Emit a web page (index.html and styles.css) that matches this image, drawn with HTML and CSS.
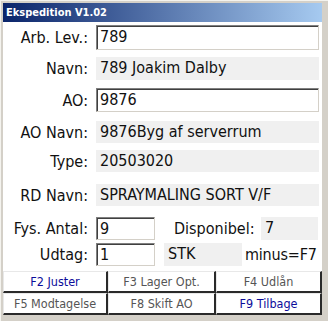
FILE: index.html
```html
<!DOCTYPE html>
<html lang="da">
<head>
  <meta charset="UTF-8">
  <title>Ekspedition V1.02</title>
  <link rel="stylesheet" href="styles.css">
</head>
<body>

<div class="window">
  <div class="titlebar">Ekspedition V1.02</div>

  <div class="content">
    <div class="row r-arb">
      <span class="label">Arb. Lev.:</span>
      <span class="input wide">789</span>
    </div>
    <div class="row r-navn">
      <span class="label">Navn:</span>
      <span class="value wide">789 Joakim Dalby</span>
    </div>
    <div class="row r-ao">
      <span class="label">AO:</span>
      <span class="input wide">9876</span>
    </div>
    <div class="row r-aonavn">
      <span class="label">AO Navn:</span>
      <span class="value wide">9876Byg af serverrum</span>
    </div>
    <div class="row r-type">
      <span class="label">Type:</span>
      <span class="value wide">20503020</span>
    </div>
    <div class="row r-rd">
      <span class="label">RD Navn:</span>
      <span class="value wide">SPRAYMALING SORT V/F</span>
    </div>
    <div class="row r-fys">
      <span class="label">Fys. Antal:</span>
      <span class="input small">9</span>
      <span class="sublabel">Disponibel:</span>
      <span class="value dispo">7</span>
    </div>
    <div class="row r-udtag">
      <span class="label">Udtag:</span>
      <span class="input small">1</span>
      <span class="value unit">STK</span>
      <span class="hint">minus=F7</span>
    </div>

    <!-- funktionstaster -->
    <div class="keys">
      <button class="key blue">F2 Juster</button>
      <button class="key">F3 Lager Opt.</button>
      <button class="key">F4 Udlån</button>
      <button class="key">F5 Modtagelse</button>
      <button class="key">F8 Skift AO</button>
      <button class="key blue">F9 Tilbage</button>
    </div>
  </div>
</div>

</body>
</html>
```

FILE: styles.css
```css
body {
  margin: 0;
  background: #d4d0c8;
  font-family: 'DejaVu Sans Condensed', 'DejaVu Sans', sans-serif;
  color: #000;
}

.window {
  width: 328px;
  height: 321px;
  box-sizing: border-box;
  padding: 3px 6px 6px 3px;
  border-top: 1px solid #f4f3ee;
  border-left: 1px solid #f4f3ee;
  display: flex;
  flex-direction: column;
}

.titlebar {
  height: 19px;
  margin-top: -1px;
  margin-left: -1px;
  padding-left: 3px;
  background: linear-gradient(to right, #0a246a, #a6caf0);
  color: white;
  font-weight: bold;
  font-size: 11px;
  line-height: 19px;
}

.content {
  flex: 1;
  background: #fff;
  margin-left: -1px;
  display: flex;
  flex-direction: column;
}

.row {
  display: flex;
  align-items: center;
  height: 24px;
  font-size: 16px;
  color: #111;
}

.r-arb { margin-top: 3px; height: 25px; }
.r-navn { margin-top: 7px; height: 23px; }
.r-ao { margin-top: 8px; }
.r-aonavn { margin-top: 9px; height: 22px; }
.r-type { margin-top: 7px; height: 22px; }
.r-rd { margin-top: 12px; height: 22px; }
.r-fys { margin-top: 11px; height: 23px; }
.r-udtag { margin-top: 3px; height: 23px; }

.label {
  width: 85px;
  text-align: right;
  margin-right: 8px;
  flex: none;
}

.input {
  box-sizing: border-box;
  height: 100%;
  background: #fff;
  border-top: 1px solid #808080;
  border-left: 1px solid #808080;
  border-right: 1px solid #d4d0c8;
  border-bottom: 1px solid #d4d0c8;
  box-shadow: inset 1px 1px 0 #404040;
  padding-left: 3px;
  line-height: 21px;
}

.value {
  box-sizing: border-box;
  height: 100%;
  background: #f0f0f0;
  padding-left: 4px;
  line-height: 22px;
}

.wide { width: 223px; }
.small { width: 59px; }

.sublabel {
  margin-left: 19px;
  width: 87px;
}

.dispo {
  width: 57px;
}

.unit {
  margin-left: 9px;
  width: 78px;
}

.hint {
  margin-left: 3px;
  letter-spacing: -0.2px;
}

.keys {
  margin-top: 5px;
  display: grid;
  grid-template-columns: 105px 108px 106px;
  grid-auto-rows: 22px;
}

.key {
  box-sizing: border-box;
  background: #fff;
  border: none;
  border-top: 1px solid #e8e8e8;
  border-left: 1px solid #e8e8e8;
  border-right: 2px solid #2a2a2a;
  border-bottom: 2px solid #2a2a2a;
  font-family: 'DejaVu Sans Condensed', 'DejaVu Sans', sans-serif;
  font-size: 12.5px;
  color: #555;
  padding: 0;
  cursor: pointer;
}

.key.blue {
  color: #0c0c9a;
}
```
